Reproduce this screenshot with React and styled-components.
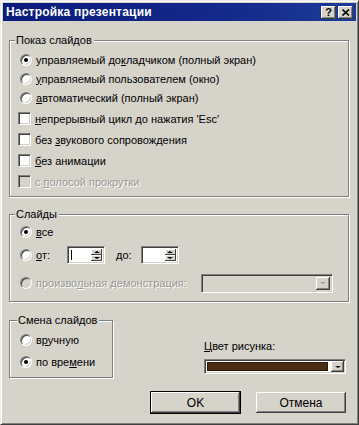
import React from "react";
import styled, { createGlobalStyle, css } from "styled-components";

const GlobalStyle = createGlobalStyle`
  html, body {
    margin: 0;
    padding: 0;
    background: #d6d3cb;
  }
  body {
    font-family: "Liberation Sans", Arial, sans-serif;
    font-size: 11px;
    color: #000;
  }
`;

const face = "#d6d3cb";

const Window = styled.div`
  width: 359px;
  height: 425px;
  box-sizing: border-box;
  background: ${face};
  border: 1px solid;
  border-color: #eeece6 #404040 #404040 #eeece6;
  box-shadow: inset 1px 1px 0 #fff, inset -1px -1px 0 #808080;
  padding: 2px;
  display: flex;
  flex-direction: column;
`;

const TitleBar = styled.div`
  height: 18px;
  flex: none;
  display: flex;
  align-items: center;
  padding: 0 3px 0 3px;
  background: linear-gradient(90deg, #0b1b7c 0%, #12288a 60%, #1d3b98 100%);
`;

const Title = styled.div`
  flex: 1;
  color: #fff;
  font-weight: bold;
  font-size: 12px;
  letter-spacing: 0.2px;
`;

const CapButton = styled.div`
  width: 15px;
  height: 13px;
  box-sizing: border-box;
  margin-left: 2px;
  background: ${face};
  box-shadow: inset -1px -1px 0 #404040, inset 1px 1px 0 #fff,
    inset -2px -2px 0 #808080;
  display: flex;
  align-items: center;
  justify-content: center;
  font-weight: bold;
  font-size: 11px;
  line-height: 1;
`;

const Body = styled.div`
  flex: 1;
  display: flex;
  flex-direction: column;
  padding: 19px 7px 0 6px;
`;

const Group = styled.div`
  position: relative;
  border: 1px solid #808080;
  box-shadow: inset 1px 1px 0 #fff, 1px 1px 0 #fff;
  margin-top: ${({ $mt }) => $mt || 0}px;
  padding: ${({ $pad }) => $pad};
  width: ${({ $w }) => ($w ? `${$w}px` : "auto")};
  box-sizing: border-box;
  display: flex;
  flex-direction: column;
`;

const Legend = styled.div`
  position: absolute;
  top: -8px;
  left: ${({ $left }) => $left || 5}px;
  padding: 0 2px 0 1px;
  background: ${face};
  line-height: 14px;
`;

const Row = styled.div`
  height: ${({ $h }) => $h}px;
  display: flex;
  align-items: center;
  padding-left: ${({ $pl }) => ($pl != null ? $pl : 9)}px;
  margin-top: ${({ $mt }) => $mt || 0}px;
  color: ${({ $disabled }) => ($disabled ? "#9a9892" : "#000")};
  text-shadow: ${({ $disabled }) => ($disabled ? "1px 1px 0 #fff" : "none")};
  white-space: nowrap;
`;

const Radio = styled.span`
  width: 12px;
  height: 12px;
  box-sizing: border-box;
  border-radius: 50%;
  background: ${({ $disabled }) => ($disabled ? face : "#fff")};
  border: 1px solid;
  border-color: #808080 #fff #fff #808080;
  box-shadow: inset 1px 1px 0 #404040, inset -1px -1px 0 #d4d0c8;
  margin-right: 4px;
  margin-left: 1px;
  flex: none;
  display: flex;
  align-items: center;
  justify-content: center;
  &::after {
    content: "";
    display: ${({ $on }) => ($on ? "block" : "none")};
    width: 4px;
    height: 4px;
    border-radius: 50%;
    background: #000;
  }
`;

const Check = styled.span`
  width: 13px;
  height: 13px;
  box-sizing: border-box;
  background: ${({ $disabled }) => ($disabled ? face : "#fff")};
  border: 1px solid;
  border-color: #808080 #fff #fff #808080;
  box-shadow: inset 1px 1px 0 #404040, inset -1px -1px 0 #d4d0c8;
  margin-right: 4px;
  flex: none;
`;

const U = styled.u`
  text-decoration: underline;
  text-underline-offset: 1px;
`;

const Sunken = styled.div`
  box-sizing: border-box;
  border: 1px solid;
  border-color: #808080 #fff #fff #808080;
  box-shadow: inset 1px 1px 0 #404040, inset -1px -1px 0 #d4d0c8;
  padding: ${({ $p }) => ($p != null ? $p : 2)}px;
  display: flex;
  align-items: stretch;
  width: ${({ $w }) => $w}px;
  height: ${({ $h }) => $h}px;
  margin-left: ${({ $ml }) => $ml || 0}px;
  background: ${({ $bg }) => $bg || "#fff"};
`;

const Field = styled.div`
  flex: 1;
  position: relative;
  background: ${({ $bg }) => $bg || "#fff"};
  ${({ $caret }) =>
    $caret &&
    css`
      &::before {
        content: "";
        position: absolute;
        left: 1px;
        top: 1px;
        bottom: 1px;
        width: 1px;
        background: #000;
      }
    `}
`;

const SpinCol = styled.div`
  width: 11px;
  display: flex;
  flex-direction: column;
  margin-left: 1px;
`;

const SpinBtn = styled.div`
  flex: 1;
  background: ${face};
  box-shadow: inset -1px -1px 0 #404040, inset 1px 1px 0 #fff;
  display: flex;
  align-items: center;
  justify-content: center;
`;

const Arrow = styled.span`
  width: 0;
  height: 0;
  border-left: 3px solid transparent;
  border-right: 3px solid transparent;
  ${({ $up, $color }) =>
    $up
      ? `border-bottom: 2px solid ${$color || "#000"};`
      : `border-top: 2px solid ${$color || "#000"};`}
`;

const DropBtn = styled.div`
  width: ${({ $w }) => $w || 14}px;
  flex: none;
  background: ${face};
  box-shadow: inset -1px -1px 0 #404040, inset 1px 1px 0 #fff,
    inset -2px -2px 0 #808080;
  display: flex;
  align-items: center;
  justify-content: center;
`;

const Swatch = styled.div`
  flex: 1;
  margin: 1px 3px 1px 1px;
  background: ${({ $color }) => $color};
  border: 1px solid #2a1808;
`;

const Label = styled.span`
  margin-left: ${({ $ml }) => $ml || 0}px;
`;

const BottomRow = styled.div`
  display: flex;
  align-items: flex-start;
  margin-top: 18px;
`;

const ColorCol = styled.div`
  display: flex;
  flex-direction: column;
  margin-left: 91px;
  margin-top: 19px;
`;

const ColorLabel = styled.div`
  height: 14px;
  line-height: 14px;
  margin-bottom: 6px;
`;

const Buttons = styled.div`
  display: flex;
  justify-content: flex-end;
  gap: 14px;
  margin-top: 13px;
  padding-right: 2px;
`;

const Button = styled.div`
  width: ${({ $w }) => $w}px;
  height: 23px;
  box-sizing: border-box;
  display: flex;
  align-items: center;
  justify-content: center;
  background: ${face};
  font-size: 12px;
  font-weight: normal;
  box-shadow: inset -1px -1px 0 #404040, inset 1px 1px 0 #fff,
    inset -2px -2px 0 #808080;
  border: 1px solid ${({ $default }) => ($default ? "#000" : "transparent")};
`;

const Spinner = ({ ml, caret }) => (
  <Sunken $w={38} $h={18} $ml={ml}>
    <Field $caret={caret} />
    <SpinCol>
      <SpinBtn>
        <Arrow $up />
      </SpinBtn>
      <SpinBtn>
        <Arrow />
      </SpinBtn>
    </SpinCol>
  </Sunken>
);

export default function App() {
  return (
    <>
      <GlobalStyle />
      <Window>
        <TitleBar>
          <Title>Настройка презентации</Title>
          <CapButton>?</CapButton>
          <CapButton>
            <svg width="8" height="7" viewBox="0 0 8 7">
              <path
                d="M0.5 0.5 L7 6.5 M7 0.5 L0.5 6.5"
                stroke="#000"
                strokeWidth="1.6"
              />
            </svg>
          </CapButton>
        </TitleBar>
        <Body>
          <Group $pad="9px 0 4px 0">
            <Legend>Показ слайдов</Legend>
            <Row $h={19}>
              <Radio $on />
              <span>
                управляемый до<U>к</U>ладчиком (полный экран)
              </span>
            </Row>
            <Row $h={19}>
              <Radio />
              <span>
                <U>у</U>правляемый пользователем (окно)
              </span>
            </Row>
            <Row $h={19}>
              <Radio />
              <span>
                <U>а</U>втоматический (полный экран)
              </span>
            </Row>
            <Row $h={21} $pl={8} $mt={1}>
              <Check />
              <span>
                <U>н</U>епрерывный цикл до нажатия 'Esc'
              </span>
            </Row>
            <Row $h={21} $pl={8}>
              <Check />
              <span>
                без <U>з</U>вукового сопровождения
              </span>
            </Row>
            <Row $h={21} $pl={8}>
              <Check />
              <span>
                <U>б</U>ез анимации
              </span>
            </Row>
            <Row $h={21} $pl={8} $disabled>
              <Check $disabled />
              <span>
                с <U>п</U>олосой прокрутки
              </span>
            </Row>
          </Group>

          <Group $mt={17} $pad="7px 0 3px 0">
            <Legend>Слайды</Legend>
            <Row $h={20}>
              <Radio $on />
              <span>
                <U>в</U>се
              </span>
            </Row>
            <Row $h={26}>
              <Radio />
              <span>
                <U>о</U>т:
              </span>
              <Spinner ml={17} caret />
              <Label $ml={11}>
                <U>д</U>о:
              </Label>
              <Spinner ml={9} />
            </Row>
            <Row $h={30} $disabled>
              <Radio $disabled />
              <span>
                произво<U>л</U>ьная демонстрация:
              </span>
              <Sunken $w={132} $h={19} $ml={14} $bg={face}>
                <Field $bg={face} />
                <DropBtn>
                  <Arrow $color="#9a9892" />
                </DropBtn>
              </Sunken>
            </Row>
          </Group>

          <BottomRow>
            <Group $w={104} $pad="8px 0 4px 0">
              <Legend $left={7}>Смена слайдов</Legend>
              <Row $h={22} $pl={9}>
                <Radio />
                <span>
                  в<U>р</U>учную
                </span>
              </Row>
              <Row $h={22} $pl={9}>
                <Radio $on />
                <span>
                  по вре<U>м</U>ени
                </span>
              </Row>
            </Group>
            <ColorCol>
              <ColorLabel>
                <U>Ц</U>вет рисунка:
              </ColorLabel>
              <Sunken $w={142} $h={15} $p={1}>
                <Swatch $color="#4a2c12" />
                <DropBtn $w={13}>
                  <Arrow />
                </DropBtn>
              </Sunken>
            </ColorCol>
          </BottomRow>

          <Buttons>
            <Button $w={91} $default>
              OK
            </Button>
            <Button $w={92}>Отмена</Button>
          </Buttons>
        </Body>
      </Window>
    </>
  );
}
